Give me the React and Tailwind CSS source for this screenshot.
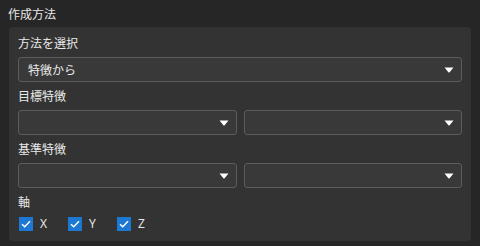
import React from "react";

const font = { fontFamily: '"Noto Sans CJK JP", "Noto Sans", sans-serif' };

function Arrow() {
  return (
    <svg width="10" height="6" viewBox="0 0 10 6" className="shrink-0">
      <path d="M0.5 0.5 H9.5 L5.6 5.2 Q5 5.8 4.4 5.2 Z" fill="#ffffff" />
    </svg>
  );
}

function Select({ value, className = "" }) {
  return (
    <div
      className={
        "h-[25px] flex items-center justify-between pl-[9px] pr-[7px] bg-[#393939] border border-[#5c5c5c] rounded-[3px] " +
        className
      }
    >
      <span className="text-[12px] leading-[16px] text-[#e8e8e8]">{value}</span>
      <Arrow />
    </div>
  );
}

function Label({ children }) {
  return <div className="text-[12px] leading-[16px] text-[#e8e8e8]">{children}</div>;
}

function Check({ label }) {
  return (
    <div className="w-[49px] flex items-center gap-[7px]">
      <div className="w-[14px] h-[14px] bg-[#1c78d2] flex items-center justify-center">
        <svg width="10" height="8" viewBox="0 0 10 8">
          <path d="M1 4.2 L3.7 6.8 L9 1.2" fill="none" stroke="#ffffff" strokeWidth="1.4" />
        </svg>
      </div>
      <span className="text-[12px] leading-[16px] text-[#e8e8e8]" style={{ fontFamily: '"Noto Sans", sans-serif' }}>
        {label}
      </span>
    </div>
  );
}

export default function App() {
  return (
    <div className="w-[480px] h-[246px] bg-[#262626] flex flex-col" style={font}>
      <div className="pl-[8px] pt-[6px] h-[27px] text-[12px] leading-[16px] text-[#e8e8e8]">作成方法</div>
      <div className="ml-[9px] w-[462px] h-[214px] bg-[#333333] rounded-[4px] px-[9px] pt-[8px] flex flex-col gap-[6px]">
        <Label>方法を選択</Label>
        <Select value="特徴から" />
        <Label>目標特徴</Label>
        <div className="flex gap-[7px]">
          <Select value="" className="flex-1" />
          <Select value="" className="flex-1" />
        </div>
        <Label>基準特徴</Label>
        <div className="flex gap-[7px]">
          <Select value="" className="flex-1" />
          <Select value="" className="flex-1" />
        </div>
        <Label>軸</Label>
        <div className="h-[16px] flex items-center pl-[1px]">
          <Check label="X" />
          <Check label="Y" />
          <Check label="Z" />
        </div>
      </div>
    </div>
  );
}
